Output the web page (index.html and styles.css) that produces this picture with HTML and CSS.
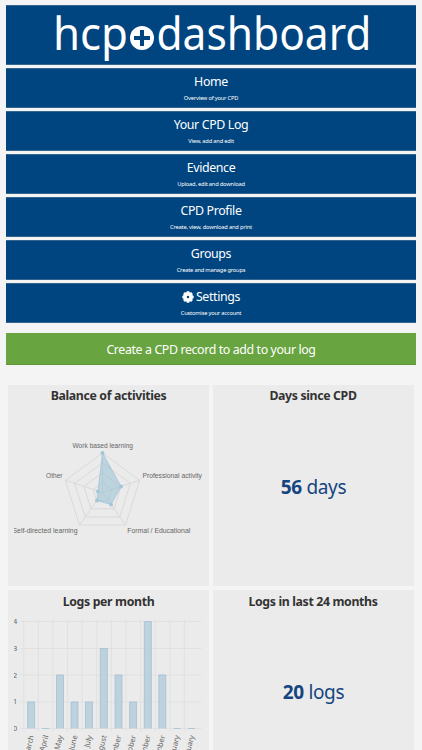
FILE: index.html
```html
<!DOCTYPE html>
<html lang="en">
<head>
    <meta charset="utf-8">
    <title>hcp dashboard</title>
    <link rel="stylesheet" href="styles.css">
</head>
<body>
    <div class="nav">
        <a class="logo" href="#">
            <svg width="410" height="60" viewBox="6 5 410 60">
                <text x="53" y="50" textLength="75" lengthAdjust="spacingAndGlyphs">hcp</text>
                <circle cx="142" cy="38" r="12" />
                <path class="plus" d="M142 30v16M134 38h16" />
                <text x="156.5" y="50" textLength="215" lengthAdjust="spacingAndGlyphs">dashboard</text>
            </svg>
        </a>
        <a class="item" href="#"><span>Home</span><small>Overview of your CPD</small></a>
        <a class="item" href="#"><span>Your CPD Log</span><small>View, add and edit</small></a>
        <a class="item" href="#"><span>Evidence</span><small>Upload, edit and download</small></a>
        <a class="item" href="#"><span>CPD Profile</span><small>Create, view, download and print</small></a>
        <a class="item" href="#"><span>Groups</span><small>Create and manage groups</small></a>
        <a class="item" href="#">
            <span><svg class="cog" width="12" height="12" viewBox="-6 -6 12 12">
                <circle r="3.1" />
                <path d="M0-5.7V-3M0 3v2.7M-5.7 0H-3M3 0h2.7M-4-4l2 2M2 2l2 2M-4 4l2-2M2-2l2-2" />
            </svg>Settings</span>
            <small>Customise your account</small>
        </a>
    </div>

    <a class="create" href="#">Create a CPD record to add to your log</a>

    <div class="cards">
        <div class="card">
            <h2>Balance of activities</h2>
            <svg class="chart" width="190" height="170" viewBox="14 410 190 170">
                <g class="web">
                    <path d="M102.5 453L139.6 480.3L125.5 525H79.5L65.4 480.3Z" />
                    <path d="M102.5 462.9L130.4 483.4L119.8 517H85.2L74.6 483.4Z" />
                    <path d="M102.5 472.8L121.1 486.4L114 508.8H91L83.9 486.4Z" />
                    <path d="M102.5 482.6L111.8 489.5L108.3 500.6H96.7L93.2 489.5Z" />
                    <path d="M102.5 492.5V453M102.5 492.5L139.6 480.3M102.5 492.5L125.5 525M102.5 492.5L79.5 525M102.5 492.5L65.4 480.3" />
                </g>
                <path class="area" d="M102.5 453L121 486.5L111 504.5L97 500.5L98 491.5Z" />
                <g class="dots">
                    <circle cx="102.5" cy="453" r="2" />
                    <circle cx="121" cy="486.5" r="2" />
                    <circle cx="111" cy="504.5" r="2" />
                    <circle cx="97" cy="500.5" r="2" />
                    <circle cx="98" cy="491.5" r="2" />
                </g>
                <g class="labels">
                    <text x="72.5" y="448" textLength="60.5" lengthAdjust="spacingAndGlyphs">Work based learning</text>
                    <text x="142.5" y="477.5" textLength="59.5" lengthAdjust="spacingAndGlyphs">Professional activity</text>
                    <text x="127.3" y="533" textLength="63" lengthAdjust="spacingAndGlyphs">Formal / Educational</text>
                    <text x="12.5" y="533" textLength="65" lengthAdjust="spacingAndGlyphs">Self-directed learning</text>
                    <text x="46" y="477.5" textLength="16.5" lengthAdjust="spacingAndGlyphs">Other</text>
                </g>
            </svg>
        </div>
        <div class="card">
            <h2>Days since CPD</h2>
            <p class="figure"><b>56</b> days</p>
        </div>
        <div class="card">
            <h2>Logs per month</h2>
            <svg class="chart" width="190" height="170" viewBox="14 615.5 190 170">
                <path class="grid" d="M20 621H201.5M20 648H201.5M20 674.5H201.5M20 701.5H201.5M20 728H201.5M23.8 619V731M38.4 619V731M53 619V731M67.6 619V731M82.2 619V731M96.8 619V731M111.4 619V731M126 619V731M140.6 619V731M155.2 619V731M169.8 619V731M184.4 619V731" />
                <g class="bars">
                    <path d="M27.6 728V701.5h7V728" />
                    <path d="M42 728h7" />
                    <path d="M56.5 728V674.5h7V728" />
                    <path d="M71 728V701.5h7V728" />
                    <path d="M85.5 728V701.5h7V728" />
                    <path d="M100.3 728V648h7V728" />
                    <path d="M115 728V674.5h7V728" />
                    <path d="M129.6 728V701.5h7V728" />
                    <path d="M144.3 728V621h7V728" />
                    <path d="M158.8 728V674.5h7V728" />
                    <path d="M173.5 728h7" />
                    <path d="M188 728h7" />
                </g>
                <g class="axis">
                    <text x="17.2" y="623.5">4</text>
                    <text x="17.2" y="650">3</text>
                    <text x="17.2" y="677">2</text>
                    <text x="17.2" y="703.5">1</text>
                    <text x="17.2" y="730.5">0</text>
                    <text transform="translate(34 735.5) rotate(-75)">March</text>
                    <text transform="translate(48.4 735.5) rotate(-75)">April</text>
                    <text transform="translate(63 735.5) rotate(-75)">May</text>
                    <text transform="translate(77.6 735.5) rotate(-75)">June</text>
                    <text transform="translate(92.2 735.5) rotate(-75)">July</text>
                    <text transform="translate(106.8 735.5) rotate(-75)">August</text>
                    <text transform="translate(121.4 735.5) rotate(-75)">September</text>
                    <text transform="translate(136 735.5) rotate(-75)">October</text>
                    <text transform="translate(150.6 735.5) rotate(-75)">November</text>
                    <text transform="translate(165.2 735.5) rotate(-75)">December</text>
                    <text transform="translate(179.8 735.5) rotate(-75)">January</text>
                    <text transform="translate(194.4 735.5) rotate(-75)">February</text>
                </g>
            </svg>
        </div>
        <div class="card">
            <h2>Logs in last 24 months</h2>
            <p class="figure"><b>20</b> logs</p>
        </div>
    </div>
</body>
</html>
```
FILE: styles.css
```css
* { box-sizing: border-box; }
html { height: 100%; overflow: hidden; }
body { font-family: "Noto Sans", sans-serif; margin: 0; padding: 5px 6px 0; height: 750px; overflow: hidden; background: #f4f4f4; color: #333; }
a { color: white; text-decoration: none; }
.nav { display: flex; flex-direction: column; gap: 3px; }
.logo, .item { background: #00457f; border: 1px solid #34658f; border-width: 1px 0; text-align: center; }
.logo { height: 60px; }
.logo svg { display: block; margin-top: -1px; fill: white; font-size: 45px; }
.plus { stroke: #00457f; stroke-width: 4; }
.item { height: 40px; padding-top: 4px; }
.item span { display: flex; justify-content: center; align-items: center; gap: 2px; font-size: 12.4px; line-height: 17px; letter-spacing: -0.37px; }
.item small { display: block; font-size: 5.7px; line-height: 8px; margin-top: 4px; letter-spacing: -0.18px; }
.cog circle { fill: none; stroke: white; stroke-width: 3.8; }
.cog path { stroke: white; stroke-width: 2.6; }
.create { display: block; height: 32px; margin-top: 10px; background: #68a43f; border: 1px solid #5e9638; border-width: 0 0 1px; font-size: 12.4px; line-height: 33px; letter-spacing: -0.39px; text-align: center; }
.cards { display: grid; grid-template-columns: 201px 201px; gap: 4.5px 3.5px; margin: 19.5px 0 0 2px; }
.card { height: 201px; padding: 2.5px 6px 0; background: #ebebeb; }
h2 { margin: 0; font-size: 12.3px; line-height: 17px; letter-spacing: -0.35px; text-align: center; }
.chart { display: block; margin-top: 6px; }
.web { fill: none; stroke: #d4d4d4; stroke-width: 0.8; }
.area { fill: rgba(151,193,213,0.55); stroke: #a9cbdc; stroke-width: 1; }
.dots { fill: #a3c6d8; }
.labels { font: 6.8px "Liberation Sans", Arial, sans-serif; fill: #666; }
.grid { stroke: #dcdcdc; stroke-width: 0.7; }
.bars { fill: #bed2de; stroke: #9fc0d0; stroke-width: 0.8; }
.axis { font-size: 7.4px; fill: #666; text-anchor: end; }
.figure { margin: 67.5px 0 0; font-size: 19px; line-height: 30px; letter-spacing: -0.35px; text-indent: 1px; text-align: center; color: #144580; }
```
